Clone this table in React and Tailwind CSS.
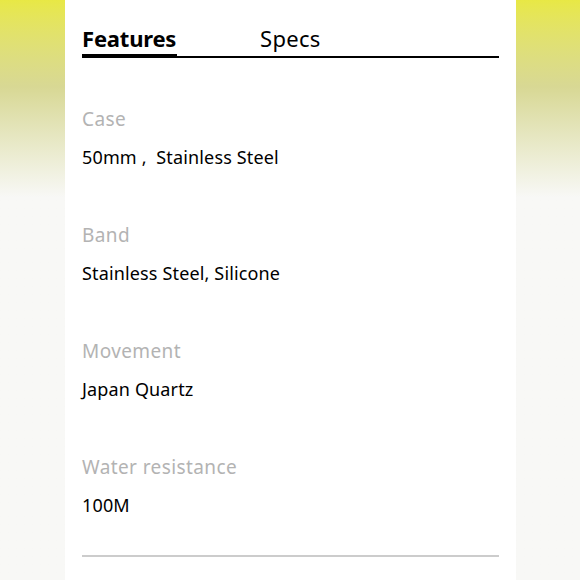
import React from "react";

const rows = [
  { label: "Case", value: "50mm ,  Stainless Steel" },
  { label: "Band", value: "Stainless Steel, Silicone" },
  { label: "Movement", value: "Japan Quartz" },
  { label: "Water resistance", value: "100M" },
];

export default function App() {
  return (
    <div className="w-[580px] h-[580px] flex bg-gradient-to-b from-[#e8e845] via-[#d8d894] via-[15%] to-[#f8f8f6] to-[34%]" style={{ fontFamily: '"Noto Sans", sans-serif' }}>
      <div className="ml-[65px] w-[451px] h-full bg-white px-[17px] pt-[24px] flex flex-col">
        {/* Tabs */}
        <div className="flex items-end border-b-2 border-black h-[34px]">
          <div className="w-[95px] border-b-4 border-black -mb-[2px] pb-[1px]">
            <span className="text-[22px] font-bold leading-[26px] text-black tracking-[-0.2px]">Features</span>
          </div>
          <div className="ml-[83px] pb-[3px]">
            <span className="text-[22px] leading-[26px] text-black tracking-[0.3px]">Specs</span>
          </div>
        </div>

        {/* Feature rows */}
        <div className="flex flex-col mt-[48px]">
          {rows.map((r) => (
            <div key={r.label} className="h-[116px] flex flex-col">
              <div className="text-[19px] leading-[26px] text-[#b3b3b3] tracking-[0.4px]">{r.label}</div>
              <div className="mt-[12px] text-[18px] leading-[26px] text-black whitespace-pre tracking-[0.15px]">{r.value}</div>
            </div>
          ))}
        </div>

        <div className="h-[2px] bg-[#cccccc] -mt-[15px]" />
      </div>
    </div>
  );
}
